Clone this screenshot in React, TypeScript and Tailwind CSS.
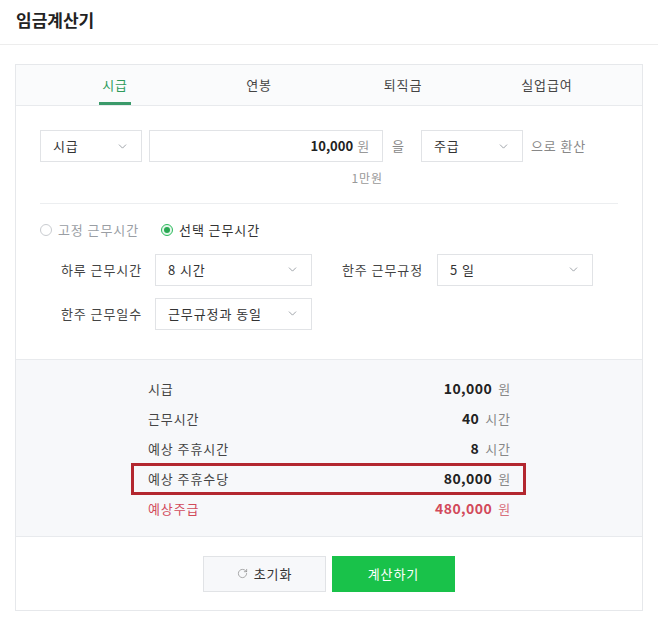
import { ChevronDown, RotateCw } from 'lucide-react';

const font = { fontFamily: '"Noto Sans CJK KR", "Noto Sans", sans-serif' };

function Select({ value, className }: { value: string; className: string }) {
  return (
    <div className={`flex items-center justify-between h-[32px] border border-[#e1e3e6] bg-white pl-[12px] pr-[12px] text-[13px] text-[#333] ${className}`}>
      <span>{value}</span>
      <ChevronDown className="w-[13px] h-[13px] text-[#8a8f96]" strokeWidth={1.5} />
    </div>
  );
}

function Radio({ checked, label }: { checked: boolean; label: string }) {
  return (
    <label className="flex items-center gap-[6px]">
      {checked ? (
        <span className="w-[12px] h-[12px] rounded-full border border-[#2dbb5d] bg-[#e6f7ec] flex items-center justify-center">
          <span className="w-[6px] h-[6px] rounded-full bg-[#2aa853]" />
        </span>
      ) : (
        <span className="w-[12px] h-[12px] rounded-full border border-[#c9ccd0] bg-white" />
      )}
      <span className={checked ? 'text-[#333]' : 'text-[#9a9ea4]'}>{label}</span>
    </label>
  );
}

const results = [
  { label: '시급', value: '10,000', unit: '원' },
  { label: '근무시간', value: '40', unit: '시간' },
  { label: '예상 주휴시간', value: '8', unit: '시간' },
  { label: '예상 주휴수당', value: '80,000', unit: '원', highlight: true },
  { label: '예상주급', value: '480,000', unit: '원', red: true },
];

export default function App() {
  return (
    <div className="w-[658px] h-[617px] bg-white text-[13px] text-[#333]" style={font}>
      <div className="h-[45px] px-[16px] flex items-center border-b border-[#ededed]">
        <h1 className="text-[17px] font-bold text-[#222] -mt-[4px]">임금계산기</h1>
      </div>

      <div className="px-[15px] pt-[19px] tracking-[0.07em]">
        <div className="border border-[#e6e8eb]">
          {/* tabs */}
          <div className="h-[41px] bg-[#fafbfc] border-b border-[#e8eaed] pl-[27px] grid grid-cols-[repeat(4,144px)]">
            {['시급', '연봉', '퇴직금', '실업급여'].map((t, i) => (
              <div key={t} className="flex justify-center">
                <div
                  className={`h-full flex items-center text-[13px] ${
                    i === 0 ? 'text-[#2f9b5c] border-b-[3px] border-[#3b9a6a] pt-[3px] px-[3px]' : 'text-[#444]'
                  }`}
                >
                  {t}
                </div>
              </div>
            ))}
          </div>

          {/* form */}
          <div className="px-[24px] pt-[24px] pb-[29px]">
            <div className="flex items-center">
              <Select value="시급" className="w-[102px]" />
              <div className="ml-[7px] w-[234px] h-[32px] border border-[#e1e3e6] flex items-center justify-end pr-[12px] gap-[4px]">
                <span className="font-bold text-[#222] tracking-normal">10,000</span>
                <span className="text-[#999]">원</span>
              </div>
              <span className="ml-[9px] text-[#888]">을</span>
              <Select value="주급" className="ml-[16px] w-[102px]" />
              <span className="ml-[8px] text-[#888]">으로 환산</span>
            </div>
            <div className="w-[343px] text-right mt-[7px] text-[12px] text-[#999]">1만원</div>

            <div className="mt-[16px] border-t border-[#eceef0]" />

            <div className="mt-[16px] flex items-center gap-[22px]">
              <Radio checked={false} label="고정 근무시간" />
              <Radio checked label="선택 근무시간" />
            </div>

            <div className="mt-[14px] pl-[21px] flex flex-col gap-[12px]">
              <div className="flex items-center">
                <span className="w-[94px] text-[#444]">하루 근무시간</span>
                <Select value="8 시간" className="w-[157px]" />
                <span className="ml-[30px] w-[95px] text-[#444]">한주 근무규정</span>
                <Select value="5 일" className="w-[156px]" />
              </div>
              <div className="flex items-center">
                <span className="w-[94px] text-[#444]">한주 근무일수</span>
                <Select value="근무규정과 동일" className="w-[157px]" />
              </div>
            </div>
          </div>

          {/* results */}
          <div className="bg-[#f7f8fa] border-y border-[#e8eaed] pt-[14px] pb-[12px]">
            <div className="ml-[115px] w-[395px]">
              {results.map((r) => (
                <div
                  key={r.label}
                  className={`flex items-center justify-between pl-[14px] pr-[12px] border-[3px] ${
                    r.highlight ? 'h-[32px] -mt-[1px] -mb-[1px] border-[#b3272f]' : 'h-[30px] border-transparent'
                  }`}
                >
                  <span className={r.red ? 'text-[#d24a5a]' : 'text-[#444]'}>{r.label}</span>
                  <span className="flex items-center gap-[6px]">
                    <span className={`font-bold text-[14px] tracking-[0.03em] ${r.red ? 'text-[#d24a5a]' : 'text-[#222]'}`}>{r.value}</span>
                    <span className={r.red ? 'text-[#d7707c]' : 'text-[#888]'}>{r.unit}</span>
                  </span>
                </div>
              ))}
            </div>
          </div>

          {/* buttons */}
          <div className="pt-[19px] pb-[18px] flex justify-center gap-[6px]">
            <button className="w-[123px] h-[36px] bg-[#f7f8fa] border border-[#e1e3e6] flex items-center justify-center gap-[6px] text-[13px] text-[#333]">
              <RotateCw className="w-[11px] h-[11px] text-[#888]" strokeWidth={1.5} />
              초기화
            </button>
            <button className="w-[123px] h-[36px] bg-[#19c24a] flex items-center justify-center text-[13px] text-white">
              계산하기
            </button>
          </div>
        </div>
      </div>
    </div>
  );
}
